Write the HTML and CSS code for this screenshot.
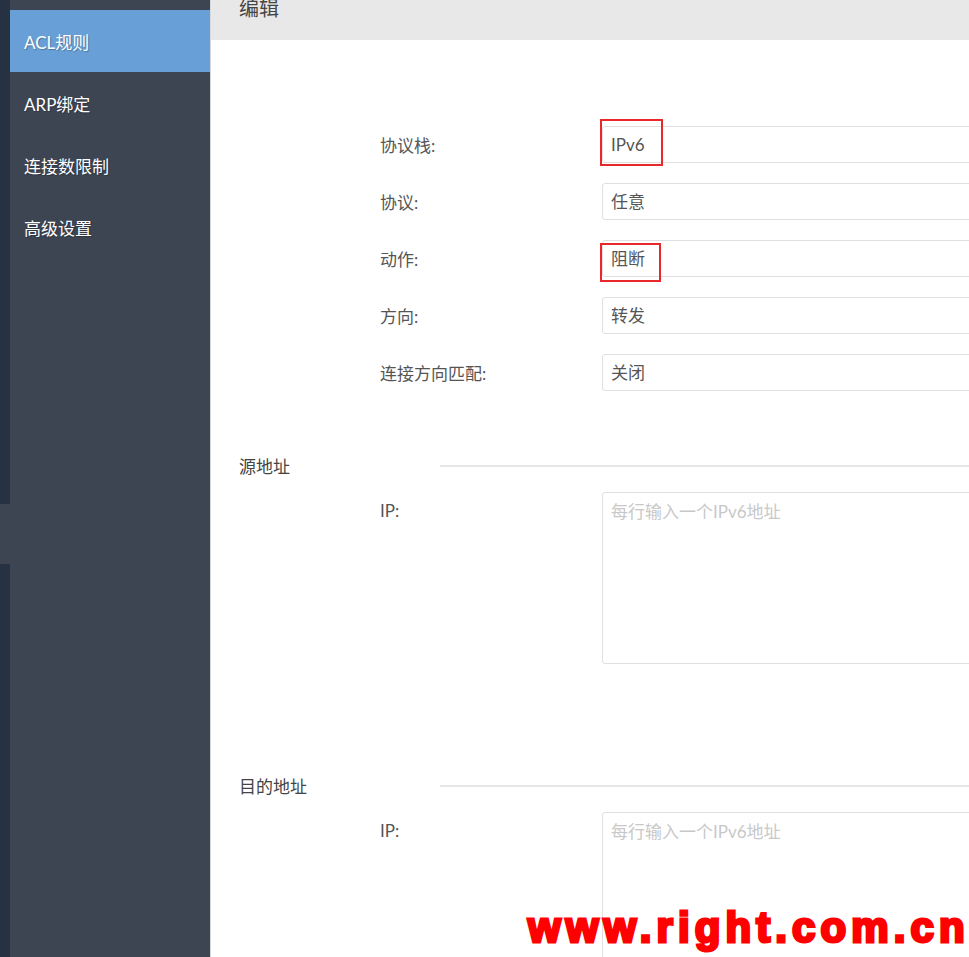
FILE: index.html
```html
<!DOCTYPE html>
<html lang="zh-CN">
<head>
<meta charset="utf-8">
<title>编辑</title>
<link rel="stylesheet" href="styles.css">
</head>
<body>
<div class="app">
  <div class="strip">
    <div class="strip-dark"></div>
    <div class="strip-light"></div>
    <div class="strip-dark strip-fill"></div>
  </div>
  <nav class="sidebar">
    <a class="nav-item active">ACL规则</a>
    <a class="nav-item">ARP绑定</a>
    <a class="nav-item">连接数限制</a>
    <a class="nav-item">高级设置</a>
  </nav>
  <main class="main">
    <header class="head">编辑</header>
    <div class="form">
      <div class="row">
        <label class="label">协议栈:</label>
        <div class="field"><div class="input">IPv6</div><span class="mark mark-1"></span></div>
      </div>
      <div class="row">
        <label class="label">协议:</label>
        <div class="field"><div class="input">任意</div></div>
      </div>
      <div class="row">
        <label class="label">动作:</label>
        <div class="field"><div class="input">阻断</div><span class="mark mark-2"></span></div>
      </div>
      <div class="row">
        <label class="label">方向:</label>
        <div class="field"><div class="input">转发</div></div>
      </div>
      <div class="row">
        <label class="label">连接方向匹配:</label>
        <div class="field"><div class="input">关闭</div></div>
      </div>

      <div class="section first">
        <span class="section-title">源地址</span>
        <span class="section-line"></span>
      </div>
      <div class="row row-area">
        <label class="label">IP:</label>
        <div class="field"><div class="textarea"><span class="ph">每行输入一个IPv6地址</span></div></div>
      </div>

      <div class="section second">
        <span class="section-title">目的地址</span>
        <span class="section-line"></span>
      </div>
      <div class="row row-area">
        <label class="label">IP:</label>
        <div class="field"><div class="textarea"><span class="ph">每行输入一个IPv6地址</span></div></div>
      </div>
    </div>
  </main>
</div>
<div class="watermark">www.right.com.cn</div>
</body>
</html>
```
FILE: styles.css
```css
* { box-sizing: border-box; }
html, body { margin: 0; padding: 0; height: 100%; overflow: hidden; }
body {
  font-family: Lato, "Noto Sans CJK SC", sans-serif;
  background: #fff;
  color: #555;
}
.app {
  display: flex;
  height: 957px;
}
.strip {
  width: 10px;
  display: flex;
  flex-direction: column;
}
.strip-dark { height: 504px; background: #263142; }
.strip-light { height: 60px; background: #3d4553; }
.strip-fill { flex: 1; }
.sidebar {
  width: 201px;
  background: #3d4553;
  padding-top: 10px;
  display: flex;
  flex-direction: column;
  border-right: 1px solid #d6d8db;
}
.nav-item {
  display: flex;
  align-items: center;
  height: 62px;
  padding-left: 14px;
  font-size: 17px;
  color: #fff;
  text-shadow: 1px 1px 1px rgba(0,0,0,0.25);
}
.nav-item.active {
  background: #679fd6;
}
.main {
  flex: 1;
  overflow: hidden;
  min-width: 0;
}
.head {
  height: 40px;
  background: #e8e8e8;
  padding-left: 28px;
  font-size: 20px;
  line-height: 17px;
  color: #444;
}
.form {
  padding-top: 86px;
}
.row {
  display: flex;
  align-items: center;
  height: 37px;
  margin-bottom: 20px;
}
.label {
  width: 391px;
  padding-left: 169px;
  font-size: 17px;
  color: #555;
  flex-shrink: 0;
}
.field {
  position: relative;
  flex: 1;
  min-width: 400px;
  height: 100%;
}
.input {
  height: 37px;
  width: 500px;
  border: 1px solid #e0e0e0;
  border-radius: 3px;
  padding-left: 8px;
  font-size: 17px;
  line-height: 35px;
  color: #555;
}
.mark {
  position: absolute;
  border: 2px solid #e8282a;
}
.mark-1 { left: -2px; top: -7px; width: 63px; height: 47px; }
.mark-2 { left: -2px; top: 3px; width: 61px; height: 39px; }
.section {
  display: flex;
  align-items: center;
  height: 20px;
  padding-left: 28px;
}
.section.first { margin-top: 66px; }
.section.second { margin-top: 113px; }
.section-title {
  width: 201px;
  font-size: 17px;
  color: #444;
  line-height: 20px;
}
.section-line {
  flex: 1;
  height: 2px;
  background: #e6e6e6;
  margin-top: -2px;
}
.row-area {
  height: auto;
  align-items: flex-start;
  margin-top: 15px;
  margin-bottom: 0;
}
.row-area .label { line-height: 37px; }
.textarea {
  width: 500px;
  height: 172px;
  border: 1px solid #e0e0e0;
  border-radius: 3px;
  padding: 8px 8px;
  font-size: 17px;
  line-height: 22px;
}
.ph { color: #c8c8c8; }
.watermark {
  position: absolute;
  left: 528px;
  top: 907px;
  font-family: "Liberation Sans", Arial, sans-serif;
  font-weight: 700;
  font-size: 42px;
  line-height: 42px;
  letter-spacing: 5.1px;
  color: #ff0000;
  -webkit-text-stroke: 3px #ff0000;
  white-space: nowrap;
}
```
